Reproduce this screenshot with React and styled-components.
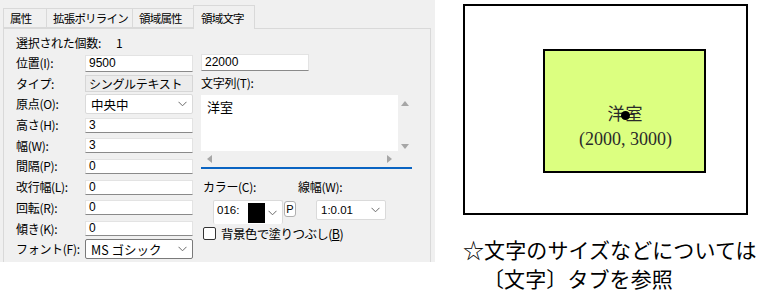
import React from "react";
import styled, { createGlobalStyle } from "styled-components";

const Global = createGlobalStyle`
  html, body {
    margin: 0;
    padding: 0;
    background: #ffffff;
  }
  body {
    font-family: "Noto Sans CJK JP", "Noto Sans", sans-serif;
    color: #000;
  }
`;

const Page = styled.div`
  width: 770px;
  height: 295px;
  display: flex;
  overflow: hidden;
`;

const Panel = styled.div`
  width: 435px;
  height: 262px;
  background: #f0f0f0;
  display: flex;
  flex-direction: column;
  padding-left: 3px;
  box-sizing: border-box;
  font-size: 12px;
`;

const TabStrip = styled.div`
  display: flex;
  align-items: flex-end;
  height: 28px;
  padding-top: 5px;
  box-sizing: border-box;
`;

const Tab = styled.div`
  box-sizing: border-box;
  width: ${(p) => p.w}px;
  height: ${(p) => (p.active ? 24 : 20)}px;
  margin-bottom: ${(p) => (p.active ? -1 : 0)}px;
  margin-left: ${(p) => (p.active ? -1 : 0)}px;
  padding-left: ${(p) => (p.active ? 7 : 6)}px;
  display: flex;
  align-items: center;
  white-space: nowrap;
  overflow: hidden;
  font-size: 11.5px;
  letter-spacing: -0.8px;
  background: #f0f0f0;
  border: 1px solid #d9d9d9;
  border-bottom: ${(p) => (p.active ? "none" : "1px solid #d9d9d9")};
  border-left: ${(p) => (p.first || p.active ? "1px solid #d9d9d9" : "none")};
  position: relative;
  z-index: ${(p) => (p.active ? 1 : 0)};
  color: #000;
`;

const TabPage = styled.div`
  flex: 1;
  width: 428px;
  box-sizing: border-box;
  border: 1px solid #d9d9d9;
  border-bottom: none;
  padding: 3px 0 0 12px;
  display: flex;
  gap: 8px;
`;

const FieldGrid = styled.div`
  display: grid;
  grid-template-columns: 69px 108px;
  grid-auto-rows: 20.7px;
  align-items: center;
`;

const Label = styled.div`
  font-size: 12px;
  line-height: 14px;
  white-space: nowrap;
  letter-spacing: -0.3px;
`;

const Count = styled.div`
  grid-column: 1 / 3;
  display: flex;
  font-size: 12px;
  letter-spacing: -0.3px;
  span + span {
    margin-left: 15px;
  }
`;

const Input = styled.div`
  box-sizing: border-box;
  height: ${(p) => p.h || 15}px;
  width: ${(p) => p.w || 108}px;
  background: #fff;
  border: 1px solid #e3e3e3;
  border-bottom-color: #8a8a8a;
  font-family: "Liberation Sans", "Noto Sans CJK JP", sans-serif;
  font-size: 12px;
  line-height: 13px;
  padding-left: 3px;
  display: flex;
  align-items: center;
`;

const ReadOnly = styled.div`
  box-sizing: border-box;
  height: 17px;
  width: 108px;
  background: #ececec;
  border: 1px solid #d6d6d6;
  font-size: 12px;
  padding-left: 3px;
  display: flex;
  align-items: center;
  letter-spacing: -0.3px;
`;

const Select = styled.div`
  box-sizing: border-box;
  height: ${(p) => p.h || 20}px;
  width: ${(p) => p.w || 108}px;
  background: #fff;
  border: 1px solid ${(p) => (p.dark ? "#7a7a7a" : "#dadada")};
  border-bottom: ${(p) => (p.open ? "none" : undefined)};
  border-radius: 2px;
  font-size: 12.5px;
  padding-left: ${(p) => p.pl || 5}px;
  display: flex;
  align-items: center;
  justify-content: space-between;
  padding-right: 5px;
`;

const Chevron = () => (
  <svg width="9" height="6" viewBox="0 0 9 6">
    <path d="M0.5 0.8 L4.5 4.8 L8.5 0.8" fill="none" stroke="#6a6a6a" strokeWidth="1" />
  </svg>
);

const ChevronSlot = styled.span`
  display: flex;
  margin-top: 8px;
`;

const RightCol = styled.div`
  width: 211px;
  display: flex;
  flex-direction: column;
`;

const TextArea = styled.div`
  margin-top: 3px;
  box-sizing: border-box;
  height: 74px;
  border-bottom: 2px solid #0a64c2;
  padding-bottom: 1px;
  display: grid;
  grid-template-columns: 1fr 14px;
  grid-template-rows: 56px 15px;
`;

const TextBody = styled.div`
  background: #fff;
  font-size: 13px;
  padding: 2px 6px;
`;

const VScroll = styled.div`
  display: flex;
  flex-direction: column;
  justify-content: space-between;
  align-items: center;
  padding: 6px 0 2px;
  background: #f0f0f0;
`;

const HScroll = styled.div`
  grid-column: 1 / 3;
  display: flex;
  justify-content: space-between;
  align-items: center;
  padding: 0 20px 0 6px;
  background: #f0f0f0;
`;

const Arrow = ({ dir }) => {
  const pts = {
    up: "0,5 4,0 8,5",
    down: "0,0 4,5 8,0",
    left: "5,0 0,4 5,8",
    right: "0,0 5,4 0,8",
  }[dir];
  const vert = dir === "up" || dir === "down";
  return (
    <svg width={vert ? 8 : 5} height={vert ? 5 : 8} viewBox={vert ? "0 0 8 5" : "0 0 5 8"}>
      <polygon points={pts} fill="#a6a6a6" />
    </svg>
  );
};

const LabelRow = styled.div`
  display: flex;
  margin-top: 9px;
  padding-left: 2px;
  font-size: 12px;
  letter-spacing: -0.3px;
  span:last-child {
    margin-left: 42px;
  }
`;

const ColorRow = styled.div`
  display: flex;
  align-items: flex-start;
  margin-top: 5px;
  padding-left: 12px;
`;

const ColorText = styled.span`
  font-family: "Liberation Sans", sans-serif;
  font-size: 11.5px;
  margin-top: ${(p) => (p.top ? 2 : 0)}px;
`;

const Swatch = styled.div`
  width: 17px;
  height: 20px;
  background: #000;
  margin: 1px 0 0 6px;
`;

const PButton = styled.div`
  box-sizing: border-box;
  width: 12px;
  height: 16px;
  margin-left: 1px;
  margin-top: 1px;
  border: 1px solid #b0b0b0;
  border-radius: 3px;
  background: #fff;
  font-family: "Liberation Sans", sans-serif;
  font-size: 11px;
  display: flex;
  align-items: center;
  justify-content: center;
`;

const CheckRow = styled.div`
  display: flex;
  align-items: center;
  margin-top: 0px;
  padding-left: 2px;
  font-size: 12.5px;
  letter-spacing: -0.6px;
`;

const Box = styled.div`
  box-sizing: border-box;
  width: 13px;
  height: 13px;
  border: 1px solid #333;
  border-radius: 2px;
  background: #fff;
  margin-right: 5px;
`;

const Side = styled.div`
  display: flex;
  flex-direction: column;
  padding-left: 28px;
`;

const Canvas = styled.div`
  box-sizing: border-box;
  width: 285px;
  height: 211px;
  margin-top: 4px;
  border: 2px solid #000;
  padding: 43px 0 0 78px;
`;

const Room = styled.div`
  box-sizing: border-box;
  width: 163px;
  height: 124px;
  background: #dcff80;
  border: 2px solid #000;
  display: flex;
  flex-direction: column;
  align-items: center;
  justify-content: center;
  font-family: "Liberation Serif", "Noto Sans CJK JP", serif;
  color: #2a2a2a;
  font-size: 18px;
  line-height: 24px;
  padding: 32px 0 0 2px;
`;

const RoomName = styled.div`
  position: relative;
  font-size: 17px;
  letter-spacing: 1px;
`;

const Dot = styled.div`
  position: absolute;
  left: 50%;
  top: 50%;
  width: 9px;
  height: 9px;
  margin: -4px 0 0 -5px;
  border-radius: 50%;
  background: #000;
`;

const Note = styled.div`
  margin-top: 20px;
  font-size: 21px;
  line-height: 29px;
  white-space: nowrap;
  letter-spacing: 0.1px;
`;

const Indent = styled.div`
  padding-left: 20px;
`;

const rows = [
  ["高さ(H):", "3"],
  ["幅(W):", "3"],
  ["間隔(P):", "0"],
  ["改行幅(L):", "0"],
  ["回転(R):", "0"],
  ["傾き(K):", "0"],
];

export default function App() {
  return (
    <Page>
      <Global />
      <Panel>
        <TabStrip>
          <Tab w={44} first>属性</Tab>
          <Tab w={86}>拡張ポリライン</Tab>
          <Tab w={61}>領域属性</Tab>
          <Tab w={62} active>領域文字</Tab>
        </TabStrip>
        <TabPage>
          <FieldGrid>
            <Count>
              <span>選択された個数:</span>
              <span>1</span>
            </Count>
            <Label>位置(I):</Label>
            <Input h={17}>9500</Input>
            <Label>タイプ:</Label>
            <ReadOnly>シングルテキスト</ReadOnly>
            <Label>原点(O):</Label>
            <Select>
              中央中
              <Chevron />
            </Select>
            {rows.map(([l, v]) => (
              <React.Fragment key={l}>
                <Label>{l}</Label>
                <Input>{v}</Input>
              </React.Fragment>
            ))}
            <Label>フォント(F):</Label>
            <Select dark>
              MS ゴシック
              <Chevron />
            </Select>
          </FieldGrid>
          <RightCol>
            <Input h={17} style={{ marginTop: 22 }}>22000</Input>
            <Label style={{ marginTop: 5, height: 16 }}>文字列(T):</Label>
            <TextArea>
              <TextBody>洋室</TextBody>
              <VScroll>
                <Arrow dir="up" />
                <Arrow dir="down" />
              </VScroll>
              <HScroll>
                <Arrow dir="left" />
                <Arrow dir="right" />
              </HScroll>
            </TextArea>
            <LabelRow>
              <span>カラー(C):</span>
              <span>線幅(W):</span>
            </LabelRow>
            <ColorRow>
              <Select w={70} h={24} open pl={3} style={{ alignItems: "flex-start", paddingTop: 1 }}>
                <ColorText top>016:</ColorText>
                <Swatch />
                <ChevronSlot>
                  <Chevron />
                </ChevronSlot>
              </Select>
              <PButton>P</PButton>
              <Select w={70} pl={4} style={{ marginLeft: 20 }}>
                <ColorText>1:0.01</ColorText>
                <Chevron />
              </Select>
            </ColorRow>
            <CheckRow>
              <Box />
              <span>
                背景色で塗りつぶし(<u>B</u>)
              </span>
            </CheckRow>
          </RightCol>
        </TabPage>
      </Panel>
      <Side>
        <Canvas>
          <Room>
            <RoomName>
              洋室
              <Dot />
            </RoomName>
            <div>(2000, 3000)</div>
          </Room>
        </Canvas>
        <Note>
          ☆文字のサイズなどについては
          <Indent>〔文字〕タブを参照</Indent>
        </Note>
      </Side>
    </Page>
  );
}
